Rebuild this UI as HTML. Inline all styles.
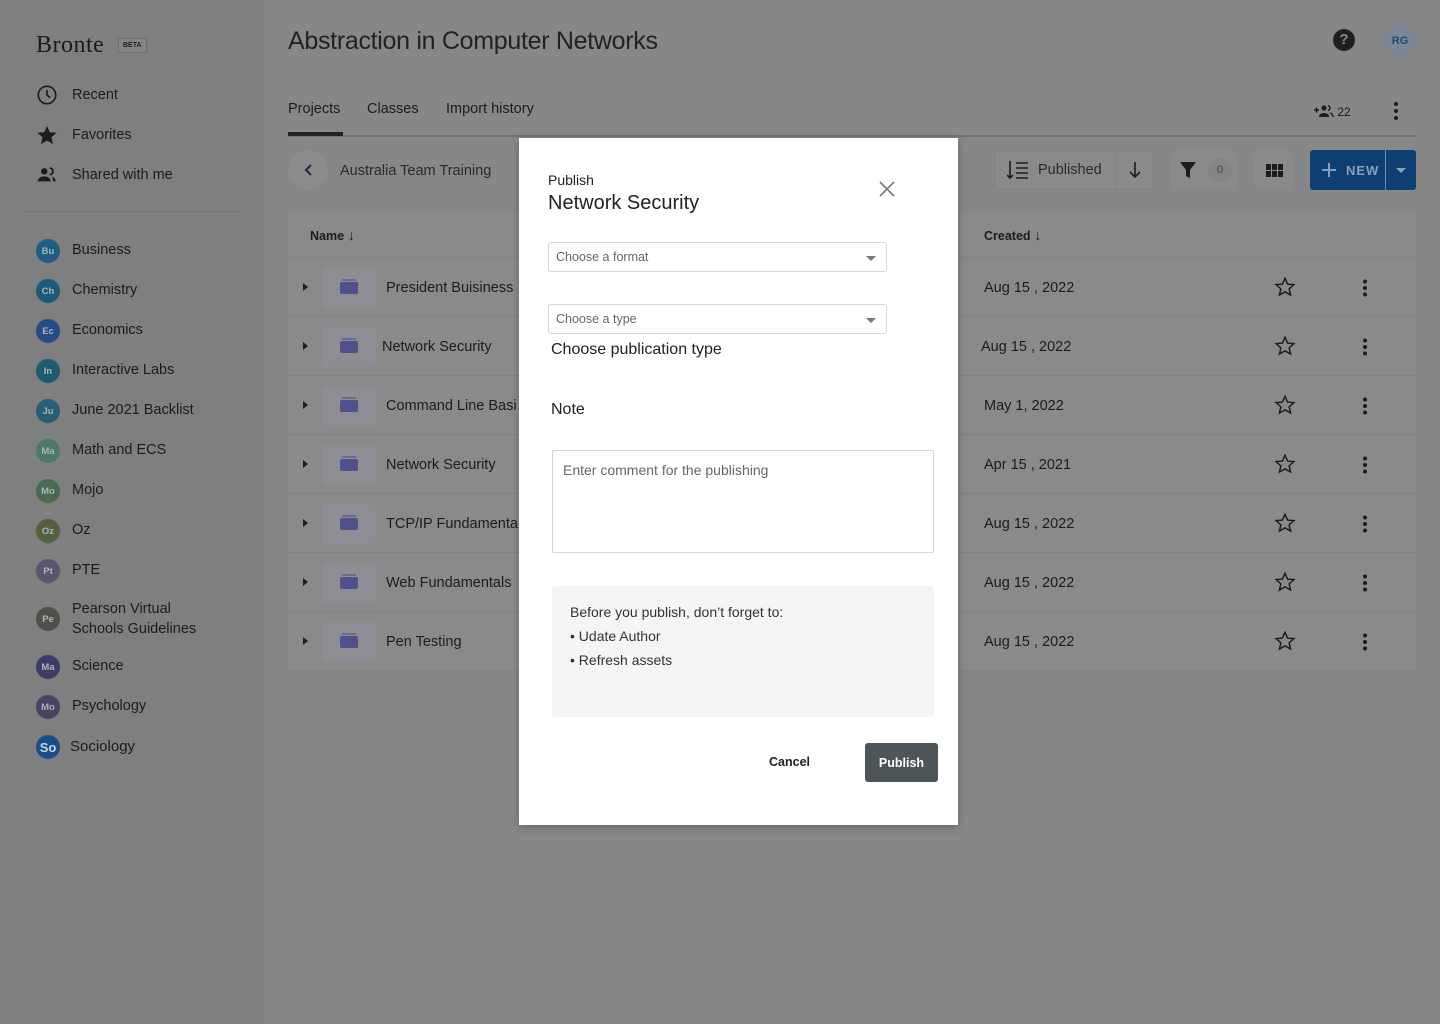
<!DOCTYPE html>
<html><head><meta charset="utf-8"><style>
*{box-sizing:border-box;margin:0;padding:0}
body{width:1440px;height:1024px;overflow:hidden;font-family:"Liberation Sans","DejaVu Sans",sans-serif;background:#878787;color:#1c1c1c;position:relative}
.a{position:absolute}
#side{left:0;top:0;width:264px;height:1024px;background:#7f7f7f}
.nav{position:absolute;left:36px;font-size:14.5px;color:#1c1c1c;display:flex;align-items:center}
.nav span.t{position:absolute;left:36px;white-space:nowrap;top:3px}
.av{width:24px;height:24px;border-radius:50%;font-size:9.5px;font-weight:bold;display:flex;align-items:center;justify-content:center;color:#a8b4bc}
.row{position:absolute;left:288px;width:1128px;height:59px;background:#8a8a8a;border-bottom:1px solid #818181}
.row .tri{position:absolute;left:15px;top:25px;border-left:5px solid #1c1c1c;border-top:4px solid transparent;border-bottom:4px solid transparent}
.row .ic{position:absolute;left:34px;top:10px;width:54px;height:40px;background:#8d8d93;border-radius:4px}
.row .ic i{position:absolute;left:18px;top:14px;width:18px;height:12px;background:#50508a;border-radius:2px}
.row .ic b{position:absolute;left:20px;top:11px;width:14px;height:2px;background:#6a6a90}
.row .nm{position:absolute;left:98px;top:22px;font-size:14.5px}
.row .dt{position:absolute;left:696px;top:22px;font-size:14.5px}
.row .st{position:absolute;left:986px;top:18px}
.row .dots{position:absolute;left:1074px;top:21px}
.sel{position:absolute;left:29px;width:339px;height:30px;border:1px solid #d6d6d6;border-radius:3px;font-size:12.5px;color:#666;padding:7px 0 0 7px}
.sel:after{content:"";position:absolute;right:10px;top:13px;border-top:5px solid #777;border-left:5px solid transparent;border-right:5px solid transparent}
</style></head><body>
<div id="side" class="a">
 <div class="a" style="left:36px;top:32px;font-family:'Liberation Serif',serif;font-size:24px;color:#1a1a1a;letter-spacing:.5px">Bronte</div>
 <div class="a" style="left:118px;top:38px;border:1px solid #6e6e6e;background:#858585;font-size:7px;font-weight:bold;padding:3px 4px;color:#222">BETA</div>
 <div class="nav" style="top:84px"><svg width="22" height="22" viewBox="0 0 24 24"><circle cx="12" cy="12" r="9.5" fill="none" stroke="#1c1c1c" stroke-width="1.8"/><path d="M12 6.5V12l3.5 3" fill="none" stroke="#1c1c1c" stroke-width="1.8"/></svg><span class="t">Recent</span></div>
 <div class="nav" style="top:124px"><svg width="22" height="22" viewBox="0 0 24 24"><path d="M12 2l3 7 7.5.6-5.7 4.9 1.8 7.4L12 18l-6.6 3.9 1.8-7.4L1.5 9.6 9 9z" fill="#1c1c1c"/></svg><span class="t">Favorites</span></div>
 <div class="nav" style="top:164px"><svg width="22" height="22" viewBox="0 0 24 24"><circle cx="9" cy="8" r="3.5" fill="#1c1c1c"/><path d="M15 4.5a3.5 3.5 0 010 7" fill="none" stroke="#1c1c1c" stroke-width="2"/><path d="M2 19c0-4 4-5.5 7-5.5s7 1.5 7 5.5z" fill="#1c1c1c"/><path d="M17.5 14c2 .6 4 1.8 4 5h-2.5" fill="#1c1c1c"/></svg><span class="t">Shared with me</span></div>
 <div class="a" style="left:24px;top:211px;width:216px;height:1px;background:#747474"></div>
 <div class="nav" style="top:239px"><div class="av" style="background:#1f5d82">Bu</div><span class="t">Business</span></div>
 <div class="nav" style="top:279px"><div class="av" style="background:#1b5a7a">Ch</div><span class="t">Chemistry</span></div>
 <div class="nav" style="top:319px"><div class="av" style="background:#264c86">Ec</div><span class="t">Economics</span></div>
 <div class="nav" style="top:359px"><div class="av" style="background:#1d5b70">In</div><span class="t">Interactive Labs</span></div>
 <div class="nav" style="top:399px"><div class="av" style="background:#285f78">Ju</div><span class="t">June 2021 Backlist</span></div>
 <div class="nav" style="top:439px"><div class="av" style="background:#4d7a66">Ma</div><span class="t">Math and ECS</span></div>
 <div class="nav" style="top:479px"><div class="av" style="background:#4c6a52">Mo</div><span class="t">Mojo</span></div>
 <div class="nav" style="top:519px"><div class="av" style="background:#55603f">Oz</div><span class="t">Oz</span></div>
 <div class="nav" style="top:559px"><div class="av" style="background:#5a5670">Pt</div><span class="t">PTE</span></div>
 <div class="nav" style="top:607px"><div class="av" style="background:#4f5048">Pe</div><span class="t" style="top:-8px;line-height:20px">Pearson Virtual<br>Schools Guidelines</span></div>
 <div class="nav" style="top:655px"><div class="av" style="background:#3f3a6a">Ma</div><span class="t">Science</span></div>
 <div class="nav" style="top:695px"><div class="av" style="background:#49435f">Mo</div><span class="t">Psychology</span></div>
 <div class="nav" style="top:735px"><div class="av" style="background:#154f86;font-size:13px;color:#c8d4e0">So</div><span class="t" style="left:34px;font-size:15px">Sociology</span></div>
</div>

<div class="a" style="left:288px;top:27px;font-size:25px;font-weight:300;color:#222;letter-spacing:-.3px">Abstraction in Computer Networks</div>
<div class="a" style="left:1333px;top:29px;width:22px;height:22px;border-radius:50%;background:#1f1f1f;color:#888;font-size:15px;font-weight:bold;text-align:center;line-height:22px">?</div>
<div class="a" style="left:1384px;top:25px;width:32px;height:32px;border-radius:50%;background:#7a8896;color:#1f4a7a;font-size:11px;font-weight:bold;text-align:center;line-height:32px">RG</div>
<div class="a" style="left:288px;top:101px;font-size:14.5px">Projects</div>
<div class="a" style="left:367px;top:101px;font-size:14.5px">Classes</div>
<div class="a" style="left:446px;top:101px;font-size:14.5px">Import history</div>
<div class="a" style="left:288px;top:135px;width:1128px;height:2px;background:#727272"></div>
<div class="a" style="left:288px;top:132px;width:55px;height:4px;background:#222"></div>
<div class="a" style="left:1314px;top:104px;font-size:12px">
<svg width="20" height="14" viewBox="0 0 20 14" style="vertical-align:-2px"><path d="M0 6h5M2.5 3.5v5" stroke="#1c1c1c" stroke-width="1.6"/><circle cx="10" cy="4" r="2.6" fill="#1c1c1c"/><path d="M5 13c0-3 2.5-4 5-4s5 1 5 4z" fill="#1c1c1c"/><path d="M14 1.5a2.6 2.6 0 010 5M16 9c2 .5 3 1.6 3 4" stroke="#1c1c1c" stroke-width="1.4" fill="none"/></svg> 22</div>
<svg class="a" style="left:1392px;top:101px" width="8" height="20"><circle cx="4" cy="3" r="2" fill="#1c1c1c"/><circle cx="4" cy="10" r="2" fill="#1c1c1c"/><circle cx="4" cy="17" r="2" fill="#1c1c1c"/></svg>

<div class="a" style="left:288px;top:150px;width:40px;height:40px;border-radius:50%;background:#8c8c8c"></div>
<svg class="a" style="left:302px;top:163px" width="12" height="14"><path d="M9 2L4 7l5 5" fill="none" stroke="#1c2a44" stroke-width="2"/></svg>
<div class="a" style="left:340px;top:163px;font-size:14.5px;color:#2a2a2a">Australia Team Training</div>

<div class="a" style="left:994px;top:150px;width:160px;height:40px;border-radius:4px;background:#8a8a8a;border:1px solid #828282"></div>
<div class="a" style="left:1115px;top:150px;width:1px;height:40px;background:#808080"></div>
<svg class="a" style="left:1007px;top:160px" width="22" height="20"><path d="M3 1v17M0 15l3 3 3-3M9 3h12M9 8h12M9 13h12M9 18h12" stroke="#1c1c1c" stroke-width="1.6" fill="none"/></svg>
<div class="a" style="left:1038px;top:162px;font-size:14.5px;color:#2a2a2a">Published</div>
<svg class="a" style="left:1128px;top:161px" width="14" height="18"><path d="M7 1v15M2 11l5 5 5-5" stroke="#1c1c1c" stroke-width="1.6" fill="none"/></svg>
<div class="a" style="left:1170px;top:150px;width:68px;height:40px;border-radius:4px;background:#8a8a8a"></div>
<svg class="a" style="left:1179px;top:161px" width="18" height="18"><path d="M1 1h16l-6 8v8l-4-2V9z" fill="#1c1c1c"/></svg>
<div class="a" style="left:1208px;top:158px;width:24px;height:24px;border-radius:50%;background:#858585;font-size:11px;text-align:center;line-height:24px;color:#444">0</div>
<div class="a" style="left:1254px;top:150px;width:40px;height:40px;border-radius:4px;background:#8a8a8a"></div>
<svg class="a" style="left:1266px;top:164px" width="17" height="13"><g fill="#1c1c1c"><rect x="0" y="0" width="5" height="6"/><rect x="6" y="0" width="5" height="6"/><rect x="12" y="0" width="5" height="6"/><rect x="0" y="7" width="5" height="6"/><rect x="6" y="7" width="5" height="6"/><rect x="12" y="7" width="5" height="6"/></g></svg>
<div class="a" style="left:1310px;top:150px;width:106px;height:40px;border-radius:3px;background:#0d3f73"></div>
<div class="a" style="left:1385px;top:150px;width:1px;height:40px;background:#6f8aa8"></div>
<svg class="a" style="left:1321px;top:162px" width="16" height="16"><path d="M8 1v14M1 8h14" stroke="#8aa0b8" stroke-width="2"/></svg>
<div class="a" style="left:1346px;top:163px;font-size:13px;font-weight:bold;color:#8aa0b8;letter-spacing:1px">NEW</div>
<div class="a" style="left:1396px;top:168px;border-top:5px solid #8aa0b8;border-left:5px solid transparent;border-right:5px solid transparent"></div>

<div class="a" style="left:288px;top:213px;width:1128px;height:45px;background:#8a8a8a;border-bottom:1px solid #818181"></div>
<div class="a" style="left:310px;top:227px;font-size:12.5px;font-weight:bold">Name <span style="font-weight:normal;font-size:15px">↓</span></div>
<div class="a" style="left:984px;top:227px;font-size:12.5px;font-weight:bold">Created <span style="font-weight:normal;font-size:15px">↓</span></div>

<div class="row" style="top:258px"><div class="tri"></div><div class="ic"><b></b><i></i></div><div class="nm">President Buisiness</div><div class="dt">Aug 15 , 2022</div><svg class="st" width="22" height="22" viewBox="0 0 24 24"><path d="M12 2.5l2.8 6.3 6.9.6-5.2 4.6 1.6 6.8L12 17.3l-6.1 3.5 1.6-6.8-5.2-4.6 6.9-.6z" fill="none" stroke="#1c1c1c" stroke-width="1.6"/></svg><svg class="dots" width="6" height="18"><circle cx="3" cy="2.5" r="2" fill="#1c1c1c"/><circle cx="3" cy="9" r="2" fill="#1c1c1c"/><circle cx="3" cy="15.5" r="2" fill="#1c1c1c"/></svg></div>
<div class="row" style="top:317px"><div class="tri"></div><div class="ic" style="left:34px"><b></b><i></i></div><div class="nm" style="left:94px">Network Security</div><div class="dt" style="left:693px">Aug 15 , 2022</div><svg class="st" width="22" height="22" viewBox="0 0 24 24"><path d="M12 2.5l2.8 6.3 6.9.6-5.2 4.6 1.6 6.8L12 17.3l-6.1 3.5 1.6-6.8-5.2-4.6 6.9-.6z" fill="none" stroke="#1c1c1c" stroke-width="1.6"/></svg><svg class="dots" width="6" height="18"><circle cx="3" cy="2.5" r="2" fill="#1c1c1c"/><circle cx="3" cy="9" r="2" fill="#1c1c1c"/><circle cx="3" cy="15.5" r="2" fill="#1c1c1c"/></svg></div>
<div class="row" style="top:376px"><div class="tri"></div><div class="ic"><b></b><i></i></div><div class="nm">Command Line Basi</div><div class="dt">May 1, 2022</div><svg class="st" width="22" height="22" viewBox="0 0 24 24"><path d="M12 2.5l2.8 6.3 6.9.6-5.2 4.6 1.6 6.8L12 17.3l-6.1 3.5 1.6-6.8-5.2-4.6 6.9-.6z" fill="none" stroke="#1c1c1c" stroke-width="1.6"/></svg><svg class="dots" width="6" height="18"><circle cx="3" cy="2.5" r="2" fill="#1c1c1c"/><circle cx="3" cy="9" r="2" fill="#1c1c1c"/><circle cx="3" cy="15.5" r="2" fill="#1c1c1c"/></svg></div>
<div class="row" style="top:435px"><div class="tri"></div><div class="ic"><b></b><i></i></div><div class="nm">Network Security</div><div class="dt">Apr 15 , 2021</div><svg class="st" width="22" height="22" viewBox="0 0 24 24"><path d="M12 2.5l2.8 6.3 6.9.6-5.2 4.6 1.6 6.8L12 17.3l-6.1 3.5 1.6-6.8-5.2-4.6 6.9-.6z" fill="none" stroke="#1c1c1c" stroke-width="1.6"/></svg><svg class="dots" width="6" height="18"><circle cx="3" cy="2.5" r="2" fill="#1c1c1c"/><circle cx="3" cy="9" r="2" fill="#1c1c1c"/><circle cx="3" cy="15.5" r="2" fill="#1c1c1c"/></svg></div>
<div class="row" style="top:494px"><div class="tri"></div><div class="ic"><b></b><i></i></div><div class="nm">TCP/IP Fundamenta</div><div class="dt">Aug 15 , 2022</div><svg class="st" width="22" height="22" viewBox="0 0 24 24"><path d="M12 2.5l2.8 6.3 6.9.6-5.2 4.6 1.6 6.8L12 17.3l-6.1 3.5 1.6-6.8-5.2-4.6 6.9-.6z" fill="none" stroke="#1c1c1c" stroke-width="1.6"/></svg><svg class="dots" width="6" height="18"><circle cx="3" cy="2.5" r="2" fill="#1c1c1c"/><circle cx="3" cy="9" r="2" fill="#1c1c1c"/><circle cx="3" cy="15.5" r="2" fill="#1c1c1c"/></svg></div>
<div class="row" style="top:553px"><div class="tri"></div><div class="ic"><b></b><i></i></div><div class="nm">Web Fundamentals</div><div class="dt">Aug 15 , 2022</div><svg class="st" width="22" height="22" viewBox="0 0 24 24"><path d="M12 2.5l2.8 6.3 6.9.6-5.2 4.6 1.6 6.8L12 17.3l-6.1 3.5 1.6-6.8-5.2-4.6 6.9-.6z" fill="none" stroke="#1c1c1c" stroke-width="1.6"/></svg><svg class="dots" width="6" height="18"><circle cx="3" cy="2.5" r="2" fill="#1c1c1c"/><circle cx="3" cy="9" r="2" fill="#1c1c1c"/><circle cx="3" cy="15.5" r="2" fill="#1c1c1c"/></svg></div>
<div class="row" style="top:612px"><div class="tri"></div><div class="ic"><b></b><i></i></div><div class="nm">Pen Testing</div><div class="dt">Aug 15 , 2022</div><svg class="st" width="22" height="22" viewBox="0 0 24 24"><path d="M12 2.5l2.8 6.3 6.9.6-5.2 4.6 1.6 6.8L12 17.3l-6.1 3.5 1.6-6.8-5.2-4.6 6.9-.6z" fill="none" stroke="#1c1c1c" stroke-width="1.6"/></svg><svg class="dots" width="6" height="18"><circle cx="3" cy="2.5" r="2" fill="#1c1c1c"/><circle cx="3" cy="9" r="2" fill="#1c1c1c"/><circle cx="3" cy="15.5" r="2" fill="#1c1c1c"/></svg></div>

<div class="a" style="left:519px;top:138px;width:439px;height:687px;background:#fff;box-shadow:0 2px 8px rgba(0,0,0,.25)">
 <div class="a" style="left:29px;top:34px;font-size:14px;color:#222">Publish</div>
 <div class="a" style="left:29px;top:54px;font-size:20px;color:#222">Network Security</div>
 <svg class="a" style="left:360px;top:43px" width="16" height="16"><path d="M1 1l14 14M15 1L1 15" stroke="#777" stroke-width="1.6"/></svg>
 <div class="sel" style="top:104px">Choose a format</div>
 <div class="sel" style="top:166px">Choose a type</div>
 <div class="a" style="left:32px;top:203px;font-size:16px;color:#222">Choose publication type</div>
 <div class="a" style="left:32px;top:263px;font-size:16px;color:#222">Note</div>
 <div class="a" style="left:33px;top:312px;width:382px;height:103px;border:1px solid #d6d6d6;border-radius:2px;font-size:14px;color:#666;padding:11px 10px">Enter comment for the publishing</div>
 <div class="a" style="left:33px;top:448px;width:382px;height:131px;background:#f4f5f7;border-radius:3px;font-size:14px;color:#333;padding:14px 18px;line-height:24px">Before you publish, don’t forget to:<br>• Udate Author<br>• Refresh assets</div>
 <div class="a" style="left:250px;top:617px;font-size:12.5px;font-weight:bold;color:#222">Cancel</div>
 <div class="a" style="left:346px;top:605px;width:73px;height:39px;background:#4d5559;border-radius:3px;color:#fff;font-size:12.5px;font-weight:bold;text-align:center;line-height:40px">Publish</div>
</div>
</body></html>
